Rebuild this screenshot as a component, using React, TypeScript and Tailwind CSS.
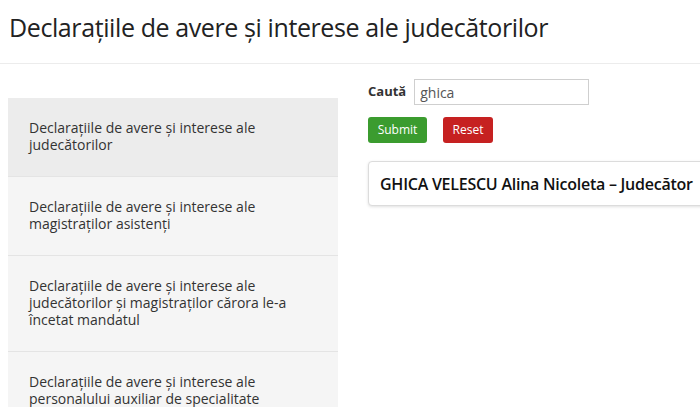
import React, { useState } from "react";

const items = [
  "Declarațiile de avere și interese ale judecătorilor",
  "Declarațiile de avere și interese ale magistraților asistenți",
  "Declarațiile de avere și interese ale judecătorilor și magistraților cărora le-a încetat mandatul",
  "Declarațiile de avere și interese ale personalului auxiliar de specialitate",
];

const App: React.FC = () => {
  const [query, setQuery] = useState("ghica");
  const [active] = useState(0);

  return (
    <div className="w-[700px] h-[407px] overflow-hidden bg-white text-[#333] font-['Open_Sans',sans-serif]">
      <div className="h-16 border-b border-[#ececec] pl-[9px] pt-[11px]">
        <h1 className="text-[25px] leading-8 tracking-[-0.4px] text-[#222]">
          Declarațiile de avere și interese ale judecătorilor
        </h1>
      </div>

      <div className="flex gap-[30px] pl-2 pt-[15px]">
        <div className="w-[330px] shrink-0 mt-[19px] flex flex-col">
          {items.map((text, i) => (
            <div
              key={i}
              className={
                "pl-[21px] pr-8 pt-[21px] pb-[23px] border-b border-[#e4e4e4] text-[14px] leading-[17px] " +
                (i === active ? "bg-[#ececec]" : "bg-[#f5f5f5]")
              }
            >
              {text}
            </div>
          ))}
        </div>

        <div className="flex-1 min-w-0">
          <div className="flex items-center gap-2">
            <label className="text-[13px] font-bold text-[#333]">Caută</label>
            <input
              type="text"
              value={query}
              onChange={(e) => setQuery(e.target.value)}
              className="w-[175px] h-[26px] px-[5px] border border-[#cfcfcf] text-[14px] text-[#555] outline-none"
            />
          </div>

          <div className="flex gap-4 mt-3">
            <button
              type="button"
              className="w-[59px] h-[26px] rounded-[3px] bg-[#3b9c2f] text-white text-[12px]"
            >
              Submit
            </button>
            <button
              type="button"
              className="w-[50px] h-[26px] rounded-[3px] bg-[#c62121] text-white text-[12px]"
            >
              Reset
            </button>
          </div>

          <div className="mt-[18px] w-[360px] h-[45px] flex items-center pl-[11px] border border-[#dcdcdc] rounded-[4px] shadow-[0_1px_3px_rgba(0,0,0,0.12)] bg-white">
            <span className="text-[16px] font-semibold text-[#111] whitespace-nowrap tracking-[-0.25px]">
              GHICA VELESCU Alina Nicoleta – Judecător
            </span>
          </div>
        </div>
      </div>
    </div>
  );
};

export default App;
